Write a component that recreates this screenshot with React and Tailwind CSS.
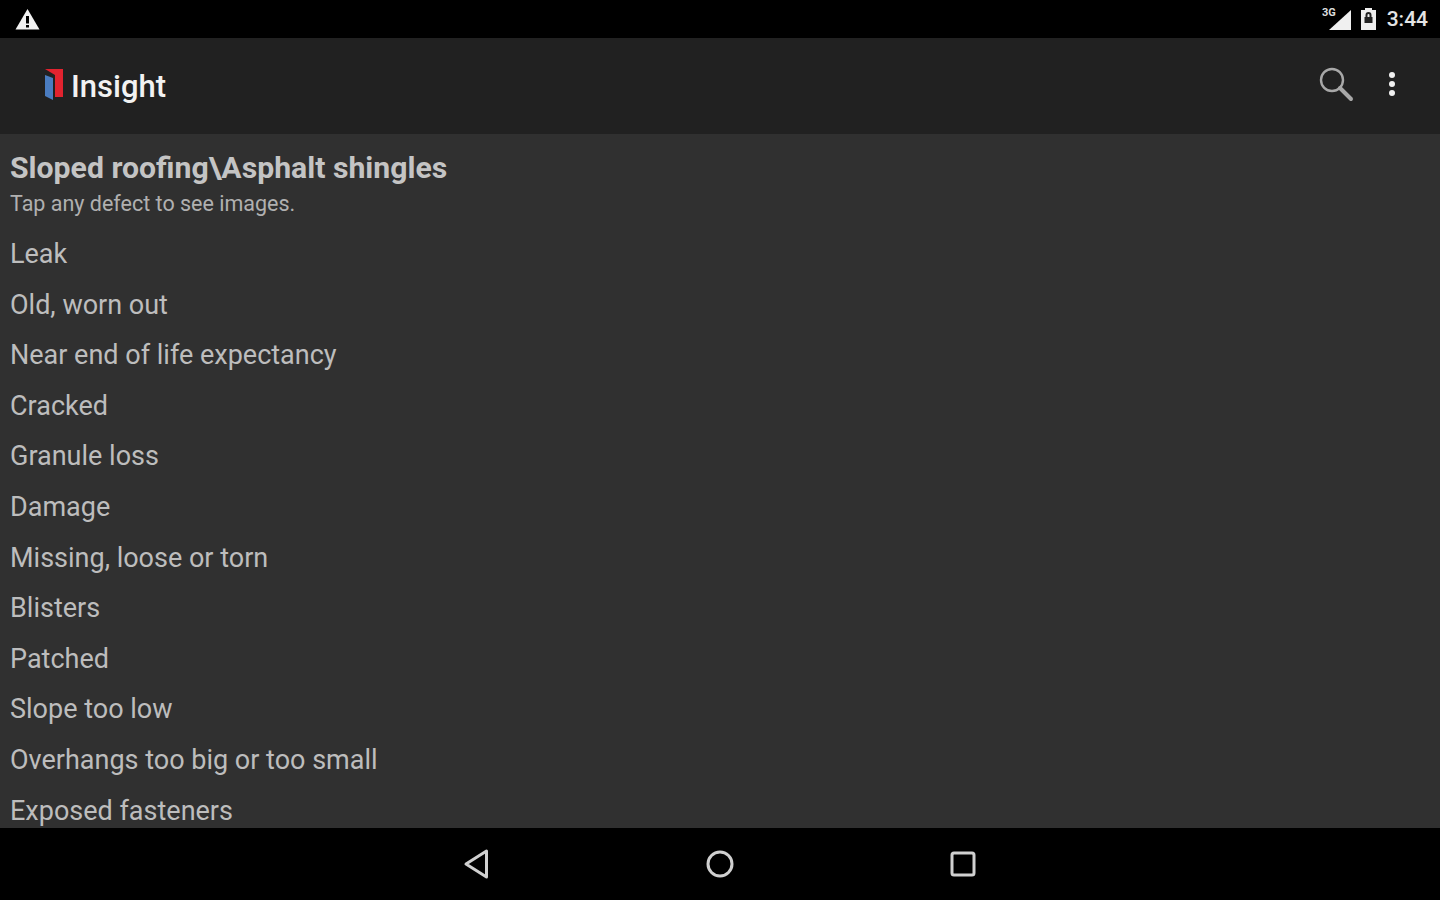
const items = ["Leak","Old, worn out","Near end of life expectancy","Cracked","Granule loss","Damage","Missing, loose or torn","Blisters","Patched","Slope too low","Overhangs too big or too small","Exposed fasteners"];

export default function App() {
  return (
    <div className="flex h-[900px] w-[1440px] flex-col overflow-hidden bg-[#303030] font-['Roboto',sans-serif]">
      <div className="flex h-[38px] shrink-0 items-center justify-between bg-black pl-[15px] pr-[12px]">
        <svg width="25" height="22" viewBox="0 0 25 22"><path d="M12.5 1 L24.5 21.5 H0.5 Z" fill="#f2f2f2"/><rect x="11" y="8" width="3" height="7.5" fill="#000"/><rect x="11" y="17" width="3" height="2.5" fill="#000"/></svg>
        <div className="flex items-center">
          <svg width="30" height="24" viewBox="0 0 30 24" className="mr-[8px]"><path d="M29 3 V23 H7 Z" fill="#f0f0f0"/><text x="0" y="9" fontSize="11" fontWeight="700" fill="#ddd" fontFamily="Roboto">3G</text></svg>
          <svg width="17" height="22" viewBox="0 0 17 22" className="mr-[10px]"><path d="M5 0 H12 V2 H16 V22 H1 V2 H5 Z" fill="#eee"/><path d="M5.5 9 V7 a3 3 0 0 1 6 0 V9 H9.5 V7 a1 1 0 0 0-2 0 V9 Z M4.5 9 H12.5 V15 H4.5 Z" fill="#222"/></svg>
          <span className="text-[21px] font-medium leading-none text-[#e4e4e4]">3:44</span>
        </div>
      </div>
      <div className="flex h-[96px] shrink-0 items-center justify-between bg-[#212121] pl-[45px] pr-[45px]">
        <div className="flex items-center">
          <svg width="19" height="32" viewBox="0 0 19 32" className="mt-[-3px]"><path d="M0 0 H18 V28 H10 V6 Z" fill="#e2232f"/><path d="M0 6 L8 9 V31 L0 27 Z" fill="#4a7cc0"/></svg>
          <span className="ml-[7px] text-[31px] font-medium leading-none text-[#f2f2f2]">Insight</span>
        </div>
        <div className="flex items-center gap-[35px]">
          <svg width="36" height="36" viewBox="0 0 36 36" fill="none" className="mt-[-4px]"><circle cx="14" cy="14" r="11" stroke="#a8a8a8" strokeWidth="2.4"/><path d="M22 22 L33 33" stroke="#a8a8a8" strokeWidth="4" strokeLinecap="round"/></svg>
          <div className="mt-[-4px] flex flex-col gap-[3px]">
            <div className="size-[6px] rounded-full bg-[#f0f0f0]"/>
            <div className="size-[6px] rounded-full bg-[#f0f0f0]"/>
            <div className="size-[6px] rounded-full bg-[#f0f0f0]"/>
          </div>
        </div>
      </div>
      <div className="flex min-h-0 flex-1 flex-col overflow-hidden px-[10px] pt-[16px]">
        <h1 className="text-[30.2px] font-bold leading-[36px] text-[#c4c4c4]">Sloped roofing\Asphalt shingles</h1>
        <p className="text-[21.5px] leading-[36px] text-[#b0b0b0]">Tap any defect to see images.</p>
        <ul className="mt-[7px]">
          {items.map((t) => (
            <li key={t} className="h-[50.6px] text-[27px] leading-[50.6px] text-[#bdbdbd]">{t}</li>
          ))}
        </ul>
      </div>
      <div className="flex h-[72px] shrink-0 items-center justify-center gap-[215px] bg-black">
        <svg width="28" height="32" viewBox="0 0 28 32" fill="none"><path d="M23.5 3 V29 L3 16 Z" stroke="#d0d0d0" strokeWidth="3" strokeLinejoin="round"/></svg>
        <svg width="28" height="28" viewBox="0 0 28 28" fill="none"><circle cx="14" cy="14" r="12" stroke="#d0d0d0" strokeWidth="3"/></svg>
        <svg width="28" height="28" viewBox="0 0 28 28" fill="none"><rect x="3" y="3" width="22" height="22" rx="2" stroke="#d0d0d0" strokeWidth="3"/></svg>
      </div>
    </div>
  );
}
